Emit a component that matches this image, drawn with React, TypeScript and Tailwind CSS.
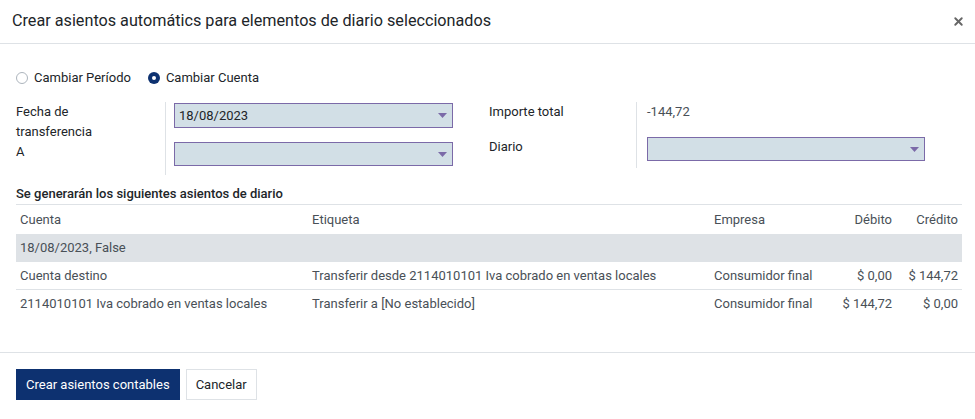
import { X } from "lucide-react";

function Caret() {
  return (
    <svg width="9" height="5" viewBox="0 0 9 5" className="shrink-0">
      <path d="M0 0h9L4.5 5z" fill="#7b6aa8" />
    </svg>
  );
}

function SelectBox({ value, h = "h-[25px]" }: { value?: string; h?: string }) {
  return (
    <div
      className={`flex ${h} w-full items-center justify-between border border-[#7b6aa8] bg-[#d2dfe6] pl-[4px] pr-[5px] text-[13px] text-[#212529]`}
    >
      <span>{value}</span>
      <Caret />
    </div>
  );
}

function Radio({ checked, label }: { checked?: boolean; label: string }) {
  return (
    <label className="flex items-center gap-[6px]">
      {checked ? (
        <span className="flex h-[12px] w-[12px] items-center justify-center rounded-full bg-[#0d3170]">
          <span className="h-[4px] w-[4px] rounded-full bg-white" />
        </span>
      ) : (
        <span className="h-[12px] w-[12px] rounded-full border border-[#adb5bd] bg-white" />
      )}
      <span>{label}</span>
    </label>
  );
}

const rows = [
  {
    cuenta: "Cuenta destino",
    etiqueta: "Transferir desde 2114010101 Iva cobrado en ventas locales",
    empresa: "Consumidor final",
    debito: "$ 0,00",
    credito: "$ 144,72",
  },
  {
    cuenta: "2114010101 Iva cobrado en ventas locales",
    etiqueta: "Transferir a [No establecido]",
    empresa: "Consumidor final",
    debito: "$ 144,72",
    credito: "$ 0,00",
  },
];

export default function App() {
  return (
    <div
      className="flex h-[419px] w-[975px] flex-col bg-white text-[13px] text-[#212529]"
      style={{ fontFamily: "Roboto, 'Noto Sans', sans-serif" }}
    >
      <header className="flex h-[44px] shrink-0 items-center justify-between border-b border-[#dee2e6] pl-[12px] pr-[10px]">
        <h4 className="text-[16.2px] text-[#212529]">
          Crear asientos automátics para elementos de diario seleccionados
        </h4>
        <X className="h-[13px] w-[13px] text-[#666]" strokeWidth={3.5} />
      </header>

      <div className="flex h-[308px] flex-col px-[16px]">
        <div className="mt-[24px] flex h-[20px] items-center gap-[17px]">
          <Radio label="Cambiar Período" />
          <Radio checked label="Cambiar Cuenta" />
        </div>

        <div className="mt-[14px] grid grid-cols-[437px_436px] gap-x-[36px]">
          <div className="grid grid-cols-[150px_1fr] grid-rows-[40px_33px]">
            <div className="border-r border-[#dee2e6] leading-[20px]">
              Fecha de
              <br />
              transferencia
            </div>
            <div className="pl-[8px] pt-[1px]">
              <SelectBox value="18/08/2023" />
            </div>
            <div className="border-r border-[#dee2e6] leading-[20px]">A</div>
            <div className="pl-[8px]">
              <SelectBox h="h-[24px]" />
            </div>
          </div>
          <div className="grid grid-cols-[148px_1fr] grid-rows-[35px_31px]">
            <div className="border-r border-[#dee2e6] leading-[20px]">Importe total</div>
            <div className="pl-[10px] leading-[20px] text-[#495057]">-144,72</div>
            <div className="border-r border-[#dee2e6] leading-[20px]">Diario</div>
            <div className="pl-[10px]">
              <SelectBox h="h-[24px]" />
            </div>
          </div>
        </div>

        <div className="mt-[11px] font-medium leading-[16px]">
          Se generarán los siguientes asientos de diario
        </div>
        <table className="mt-[2px] w-full table-fixed border-collapse text-[#495057]">
          <colgroup>
            <col className="w-[292px]" />
            <col className="w-[402px]" />
            <col className="w-[120px]" />
            <col className="w-[66px]" />
            <col className="w-[66px]" />
          </colgroup>
          <thead>
            <tr className="h-[29px] border-t border-[#dee2e6]">
              <th className="pl-[4px] text-left font-normal">Cuenta</th>
              <th className="pl-[4px] text-left font-normal">Etiqueta</th>
              <th className="pl-[4px] text-left font-normal">Empresa</th>
              <th className="pr-[4px] text-right font-normal">Débito</th>
              <th className="pr-[4px] text-right font-normal">Crédito</th>
            </tr>
          </thead>
          <tbody>
            <tr className="h-[28px] bg-[#dee2e6]">
              <td colSpan={5} className="pl-[4px]">
                18/08/2023, False
              </td>
            </tr>
            {rows.map((r, i) => (
              <tr key={i} className="h-[28px] border-b border-[#dee2e6] last:border-b-0">
                <td className="pl-[4px] whitespace-nowrap">{r.cuenta}</td>
                <td className="pl-[4px] whitespace-nowrap">{r.etiqueta}</td>
                <td className="pl-[4px] whitespace-nowrap">{r.empresa}</td>
                <td className="pr-[4px] text-right whitespace-nowrap">{r.debito}</td>
                <td className="pr-[4px] text-right whitespace-nowrap">{r.credito}</td>
              </tr>
            ))}
          </tbody>
        </table>
      </div>

      <footer className="flex gap-[6px] border-t border-[#dee2e6] px-[16px] pt-[16px]">
        <button className="h-[31px] bg-[#0d3170] px-[10px] text-[13px] text-white">
          Crear asientos contables
        </button>
        <button className="h-[31px] border border-[#dee2e6] bg-white px-[9px] text-[13px] text-[#212529]">
          Cancelar
        </button>
      </footer>
    </div>
  );
}
